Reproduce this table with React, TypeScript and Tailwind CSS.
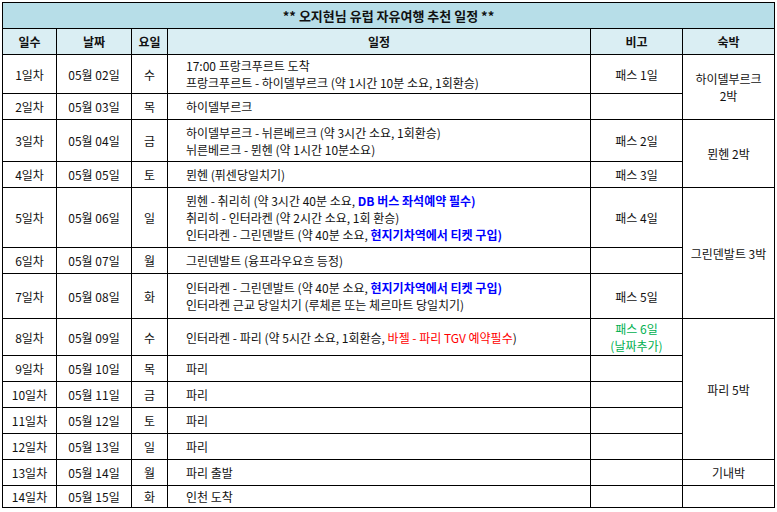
import React from "react";

type Row = {
  day: string;
  date: string;
  dow: string;
  h: string;
  plan: React.ReactNode;
  note?: React.ReactNode;
  stay?: React.ReactNode;
  stayRows?: number;
  skipStay?: boolean;
};

const blue = "font-bold text-[#0000ff]";
const red = "text-[#ff0000]";

const ROWS: Row[] = [
  {
    day: "1일차", date: "05월 02일", dow: "수", h: "h-[39px]",
    plan: (<><div>17:00 프랑크푸르트 도착</div><div>프랑크푸르트 - 하이델부르크 (약 1시간 10분 소요, 1회환승)</div></>),
    note: "패스 1일",
    stay: (<><div>하이델부르크</div><div>2박</div></>), stayRows: 2,
  },
  { day: "2일차", date: "05월 03일", dow: "목", h: "h-[26px]", plan: "하이델부르크", skipStay: true },
  {
    day: "3일차", date: "05월 04일", dow: "금", h: "h-[42px]",
    plan: (<><div>하이델부르크 - 뉘른베르크 (약 3시간 소요, 1회환승)</div><div>뉘른베르크 - 뮌헨 (약 1시간 10분소요)</div></>),
    note: "패스 2일", stay: "뮌헨 2박", stayRows: 2,
  },
  { day: "4일차", date: "05월 05일", dow: "토", h: "h-[26px]", plan: "뮌헨 (퓌센당일치기)", note: "패스 3일", skipStay: true },
  {
    day: "5일차", date: "05월 06일", dow: "일", h: "h-[60px]",
    plan: (<>
      <div>뮌헨 - 취리히 (약 3시간 40분 소요, <span className={blue}>DB 버스 좌석예약 필수)</span></div>
      <div>취리히 - 인터라켄 (약 2시간 소요, 1회 환승)</div>
      <div>인터라켄 - 그린덴발트 (약 40분 소요, <span className={blue}>현지기차역에서 티켓 구입)</span></div>
    </>),
    note: "패스 4일", stay: "그린덴발트 3박", stayRows: 3,
  },
  { day: "6일차", date: "05월 07일", dow: "월", h: "h-[26px]", plan: "그린덴발트 (융프라우요흐 등정)", skipStay: true },
  {
    day: "7일차", date: "05월 08일", dow: "화", h: "h-[45px]",
    plan: (<>
      <div>인터라켄 - 그린덴발트 (약 40분 소요, <span className={blue}>현지기차역에서 티켓 구입)</span></div>
      <div>인터라켄 근교 당일치기 (루체른 또는 체르마트 당일치기)</div>
    </>),
    note: "패스 5일", skipStay: true,
  },
  {
    day: "8일차", date: "05월 09일", dow: "수", h: "h-[37px]",
    plan: (<div>인터라켄 - 파리 (약 5시간 소요, 1회환승, <span className={red}>바젤 - 파리 TGV 예약필수</span>)</div>),
    note: (<div className="text-[#00b050]"><div>패스 6일</div><div>(날짜추가)</div></div>),
    stay: "파리 5박", stayRows: 5,
  },
  { day: "9일차", date: "05월 10일", dow: "목", h: "h-[26px]", plan: "파리", skipStay: true },
  { day: "10일차", date: "05월 11일", dow: "금", h: "h-[26px]", plan: "파리", skipStay: true },
  { day: "11일차", date: "05월 12일", dow: "토", h: "h-[26px]", plan: "파리", skipStay: true },
  { day: "12일차", date: "05월 13일", dow: "일", h: "h-[26px]", plan: "파리", skipStay: true },
  { day: "13일차", date: "05월 14일", dow: "월", h: "h-[26px]", plan: "파리 출발", stay: "기내박", stayRows: 1 },
  { day: "14일차", date: "05월 15일", dow: "화", h: "h-[22px]", plan: "인천 도착", stay: "", stayRows: 1 },
];

const cell = "border border-black p-0 text-center align-middle";

export default function App() {
  return (
    <div className="min-h-screen bg-white p-[2px] font-['Noto_Sans_CJK_KR','Malgun_Gothic',sans-serif] text-[12px] leading-[17px] text-[#111]">
      <table className="w-[772px] table-fixed border-collapse border border-black">
        <colgroup>
          <col className="w-[54px]" />
          <col className="w-[75px]" />
          <col className="w-[36px]" />
          <col className="w-[423px]" />
          <col className="w-[92px]" />
          <col className="w-[92px]" />
        </colgroup>
        <tbody>
          <tr className="h-[26px]">
            <td colSpan={6} className={`${cell} bg-[#b7dee8] text-[13px] font-bold`}>
              ** 오지현님 유럽 자유여행 추천 일정 **
            </td>
          </tr>
          <tr className="h-[26px] bg-[#daeef3] font-bold">
            <td className={cell}>일수</td>
            <td className={cell}>날짜</td>
            <td className={cell}>요일</td>
            <td className={cell}>일정</td>
            <td className={cell}>비고</td>
            <td className={cell}>숙박</td>
          </tr>
          {ROWS.map((r) => (
            <tr key={r.day} className={r.h}>
              <td className={cell}>{r.day}</td>
              <td className={cell}>{r.date}</td>
              <td className={cell}>{r.dow}</td>
              <td className={`${cell} pl-[18px] text-left`}>{r.plan}</td>
              <td className={cell}>{r.note}</td>
              {!r.skipStay && (
                <td rowSpan={r.stayRows} className={cell}>{r.stay}</td>
              )}
            </tr>
          ))}
        </tbody>
      </table>
    </div>
  );
}
